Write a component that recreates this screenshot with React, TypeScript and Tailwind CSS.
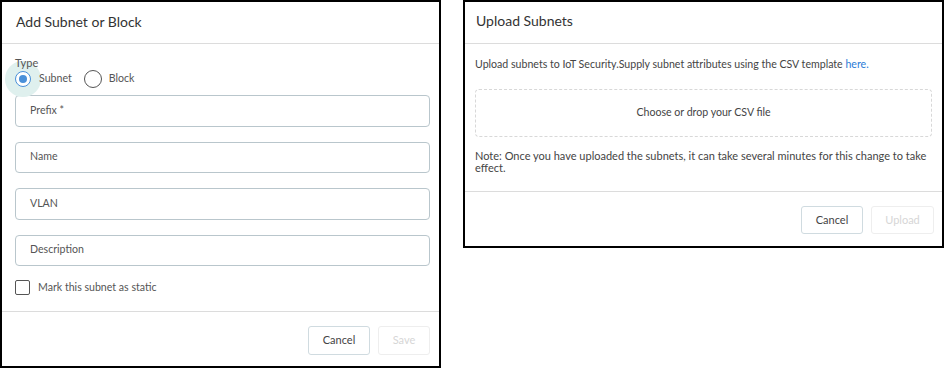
export default function App() {
  const fields = ["Prefix *", "Name", "VLAN", "Description"];
  return (
    <div className="flex items-start gap-[22px] w-[944px] h-[368px] bg-white font-['Lato',sans-serif] text-[#333]">
      {/* Add subnet modal */}
      <div className="w-[441px] h-[368px] border-2 border-black flex flex-col">
        <div className="h-[42px] border-b border-[#dcdcdc] flex items-center px-[14px] pb-[3px]">
          <span className="text-[14px] text-[#333]">Add Subnet or Block</span>
        </div>
        <div className="flex-1 pl-[13px] pr-[9px] pt-[13px]">
          <div className="relative z-10 text-[11px] leading-[12px] text-[#555]">Type</div>
          <div className="flex items-center h-[18px] mt-[1px] text-[10.6px] text-[#555]">
            <div className="relative w-[16px] h-[16px] mr-[8px]">
              <span className="absolute left-[-10px] top-[-10px] w-[36px] h-[36px] rounded-full bg-[#dff0ee]" />
              <span className="absolute inset-0 rounded-full border-[1.5px] border-[#4a90d9] bg-white flex items-center justify-center">
                <span className="w-[8px] h-[8px] rounded-full bg-[#4a90d9]" />
              </span>
            </div>
            <span className="relative">Subnet</span>
            <span className="ml-[12px] mr-[7px] w-[18px] h-[18px] rounded-full border-[1.5px] border-[#555]" />
            <span>Block</span>
          </div>
          <div className="flex flex-col gap-[15px] mt-[7px]">
            {fields.map((f) => (
              <div
                key={f}
                className="h-[31.5px] rounded-[4px] border border-[#b9c6cc] flex items-center px-[14px] text-[10.6px] text-[#555]"
              >
                {f}
              </div>
            ))}
          </div>
          <div className="flex items-center mt-[14px] text-[10.6px] text-[#555]">
            <span className="w-[15px] h-[15px] rounded-[2px] border border-[#555] mr-[8px]" />
            Mark this subnet as static
          </div>
        </div>
        <div className="h-[55px] border-t border-[#dcdcdc] flex justify-end items-center gap-[8px] pr-[9px] pt-[3px]">
          <button className="w-[62px] h-[29px] rounded-[3px] border border-[#d0dbe0] text-[11px] text-[#444]">Cancel</button>
          <button className="w-[52px] h-[29px] rounded-[3px] border border-[#eeeeee] text-[11px] text-[#d6d6d6]">Save</button>
        </div>
      </div>

      {/* Upload subnets modal */}
      <div className="w-[481px] h-[248px] border-2 border-black flex flex-col">
        <div className="h-[42px] border-b border-[#dcdcdc] flex items-center px-[11px] pb-[4px]">
          <span className="text-[14px] text-[#333]">Upload Subnets</span>
        </div>
        <div className="flex-1 px-[10px] pt-[13px] text-[#444]">
          <p className="leading-[14px] text-[10.6px]">
            Upload subnets to IoT Security.Supply subnet attributes using the CSV template{" "}
            <span className="text-[#2b7bd6]">here.</span>
          </p>
          <div className="mt-[18px] h-[48px] rounded-[4px] border border-dashed border-[#d8d8d8] flex items-center justify-center text-[10.6px] text-[#444]">
            Choose or drop your CSV file
          </div>
          <p className="mt-[13px] leading-[12px] text-[11px]">
            Note: Once you have uploaded the subnets, it can take several minutes for this change to take effect.
          </p>
        </div>
        <div className="h-[55px] border-t border-[#dcdcdc] flex justify-end items-center gap-[8px] pr-[8px] pt-[2px]">
          <button className="w-[62px] h-[28px] rounded-[3px] border border-[#d0dbe0] text-[11px] text-[#444]">Cancel</button>
          <button className="w-[63px] h-[28px] rounded-[3px] border border-[#eeeeee] text-[11px] text-[#d6d6d6]">Upload</button>
        </div>
      </div>
    </div>
  );
}
